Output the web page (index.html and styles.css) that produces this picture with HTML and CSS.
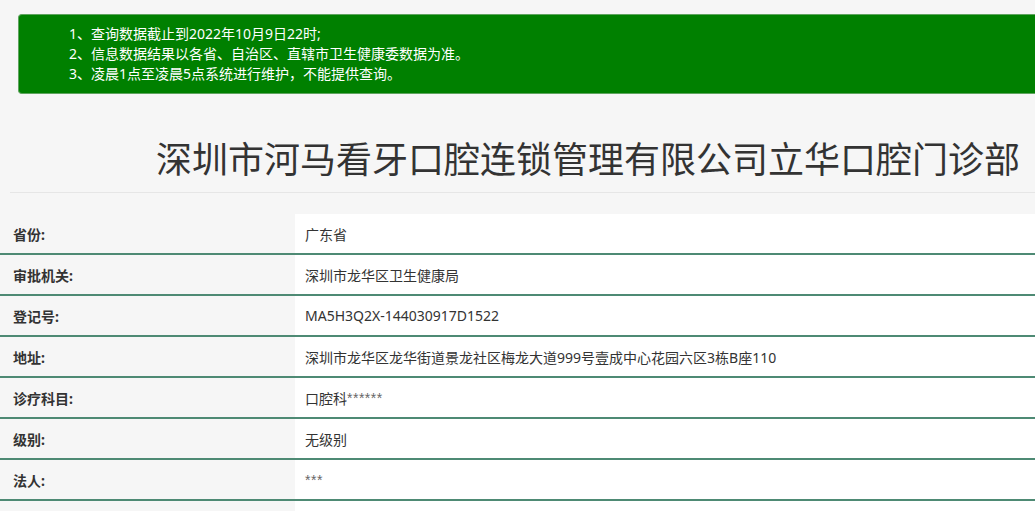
FILE: index.html
```html
<!DOCTYPE html>
<html lang="zh-CN">
<head>
<meta charset="utf-8">
<title>深圳市河马看牙口腔连锁管理有限公司立华口腔门诊部</title>
<link rel="stylesheet" href="styles.css">
</head>
<body>
<div class="notice">
  <p>1、查询数据截止到2022年10月9日22时;</p>
  <p>2、信息数据结果以各省、自治区、直辖市卫生健康委数据为准。</p>
  <p>3、凌晨1点至凌晨5点系统进行维护，不能提供查询。</p>
</div>
<div class="title-wrap">
  <h1 class="title">深圳市河马看牙口腔连锁管理有限公司立华口腔门诊部</h1>
</div>
<div class="info">
  <div class="row"><div class="label">省份:</div><div class="value">广东省</div></div>
  <div class="row"><div class="label">审批机关:</div><div class="value">深圳市龙华区卫生健康局</div></div>
  <div class="row"><div class="label">登记号:</div><div class="value">MA5H3Q2X-144030917D1522</div></div>
  <div class="row"><div class="label">地址:</div><div class="value">深圳市龙华区龙华街道景龙社区梅龙大道999号壹成中心花园六区3栋B座110</div></div>
  <div class="row"><div class="label">诊疗科目:</div><div class="value">口腔科<span class="stars">******</span></div></div>
  <div class="row"><div class="label">级别:</div><div class="value">无级别</div></div>
  <div class="row"><div class="label">法人:</div><div class="value"><span class="stars">***</span></div></div>
  <div class="row"><div class="label"></div><div class="value"></div></div>
</div>
</body>
</html>
```
FILE: styles.css
```css
html, body {
  margin: 0;
  padding: 0;
}
body {
  background: #f6f6f6;
  font-family: "Noto Sans", "Noto Sans CJK SC", sans-serif;
  color: #333;
  overflow: hidden;
}
.notice {
  margin: 14px 0 0 18px;
  background: #008000;
  border: 1px solid #5fa45f;
  border-right: none;
  border-radius: 4px 0 0 4px;
  padding: 9px 0 9px 50px;
  color: #fff;
  font-size: 14px;
  line-height: 20px;
}
.notice p {
  margin: 0;
}
.title-wrap {
  margin: 0 0 0 10px;
  border-bottom: 1px solid #e6e6e6;
  padding: 38px 15px 10px 0;
}
.title {
  margin: 0;
  text-align: right;
  font-size: 36px;
  line-height: 50px;
  font-weight: normal;
  font-family: "Noto Sans CJK SC", sans-serif;
  color: #333;
}
.info {
  margin-top: 21px;
}
.row {
  display: grid;
  grid-template-columns: 295px 1fr;
  height: 39px;
  border-bottom: 2px solid #4e8a74;
}
.label {
  display: flex;
  align-items: center;
  padding-left: 13px;
  font-size: 14px;
  font-weight: bold;
  color: #333;
  background: #f6f6f6;
}
.value {
  display: flex;
  align-items: center;
  padding-left: 10px;
  font-size: 14px;
  color: #333;
  background: #fff;
}
.stars {
  font-family: "Liberation Sans", sans-serif;
  color: #666;
  letter-spacing: 0.5px;
}
```
